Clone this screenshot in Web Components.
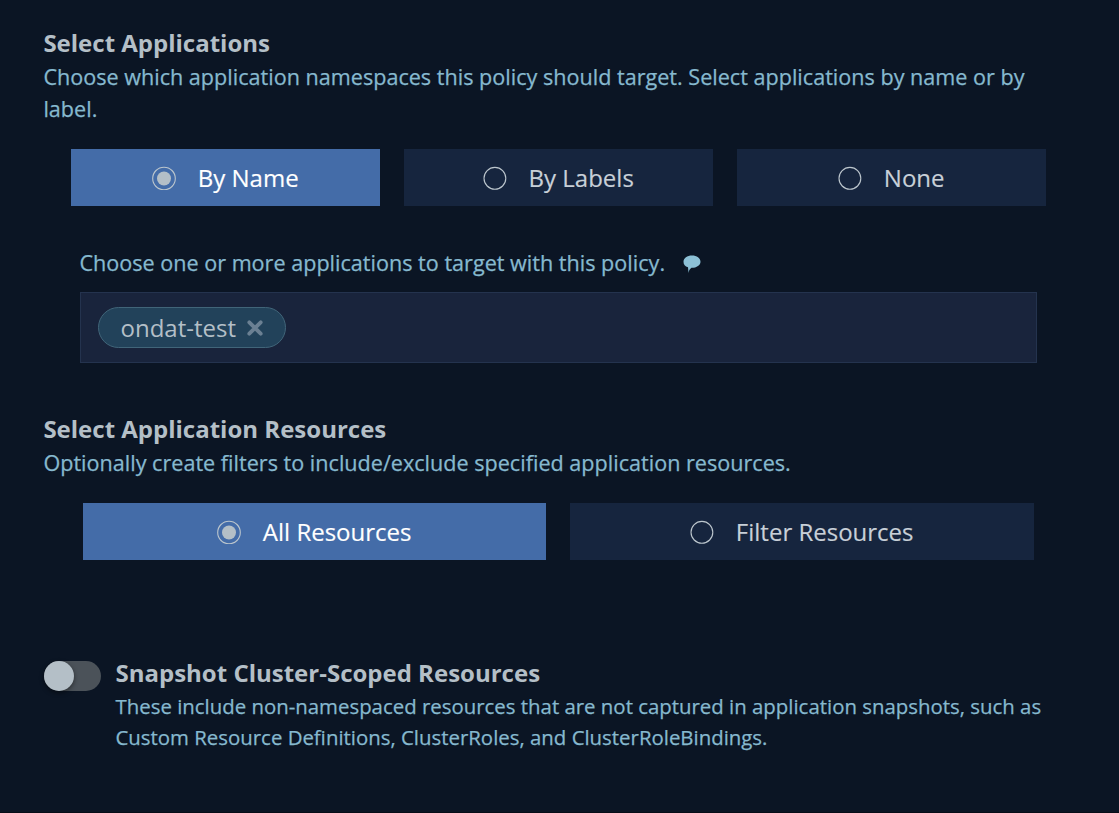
<!DOCTYPE html>
<html lang="en"><head><meta charset="utf-8"><title>Policy</title>
<style>
body{margin:0;background:#0b1524;font-family:"Open Sans",sans-serif;min-height:813px;overflow:hidden}
</style></head><body>
<policy-form></policy-form>
<script>
class SectionHead extends HTMLElement{
 constructor(){super();this.attachShadow({mode:'open'}).innerHTML=`<style>
 :host{display:block}
 h2{margin:0;font-size:24px;line-height:32px;font-weight:700;color:#b4bfc7;white-space:nowrap}
 p{margin:0;font-size:var(--desc-size,21.6px);line-height:var(--desc-lh,32px);color:#86b9cf;-webkit-text-stroke:.25px #86b9cf;white-space:nowrap;padding-top:var(--desc-gap,2px)}
 </style><h2><slot name="title"></slot></h2><p><slot></slot></p>`}
}
customElements.define('section-head',SectionHead);
class RadioTile extends HTMLElement{
 constructor(){super();this.attachShadow({mode:'open'}).innerHTML=`<style>
 :host{display:flex;box-sizing:border-box;height:57px;align-items:center;justify-content:center;gap:21.600px;background:#16253e;color:#c8d0d8;font-size:24px;line-height:32px;white-space:nowrap}
 :host([checked]){background:#446ca8;color:#fff}
 circle{fill:none;stroke:#bcc6cd;stroke-width:1.1}
 circle.dot{display:none;fill:#b4bfc7;stroke:none}
 .on{display:none}
 :host([checked]) .on,:host([checked]) circle.dot{display:block}
 :host([checked]) .off{display:none}
 svg{display:block;width:24px;height:24px;flex:none}
 span{padding-top:1px;margin-right:.2px;-webkit-text-stroke:.15px currentColor}
 </style><svg viewBox="0 0 24 24"><circle class="off" cx="11.900" cy="12.300" r="10.900"/><circle class="on" cx="12" cy="12.500" r="11.300"/><circle class="dot" cx="12" cy="12.500" r="7"/></svg><span><slot></slot></span>`}
}
customElements.define('radio-tile',RadioTile);
class AppChip extends HTMLElement{
 constructor(){super();this.attachShadow({mode:'open'}).innerHTML=`<style>
 :host{display:inline-flex;box-sizing:border-box;width:188px;height:41px;border:1px solid #416579;border-radius:21px;background:#22425a;color:#b4bfc7;font-size:24px;line-height:39px;align-items:center;padding-left:21.500px;gap:11.500px;white-space:nowrap}
 svg{width:16px;height:16px;display:block}
 </style><span><slot></slot></span><svg viewBox="0 0 16 16"><path d="M2.300 2.300L13.700 13.700M13.700 2.300L2.300 13.700" stroke="#6b8093" stroke-width="3.800" stroke-linecap="round"/></svg>`}
}
customElements.define('app-chip',AppChip);
class ToggleSwitch extends HTMLElement{
 constructor(){super();this.attachShadow({mode:'open'}).innerHTML=`<style>
 :host{display:block;width:57px;height:30px;border-radius:15px;background:#4b5259;flex:none}
 i{display:block;width:30px;height:30px;border-radius:50%;background:#b4bfc7;box-shadow:0 2px 5px rgba(0,0,0,.45)}
 </style><i></i>`}
}
customElements.define('toggle-switch',ToggleSwitch);
class PolicyForm extends HTMLElement{
 constructor(){super();this.attachShadow({mode:'open'}).innerHTML=`<style>
 :host{display:block;padding:27px 0 0 43.4px;box-sizing:border-box;height:813px;border-bottom:1px solid #070d17}
 .row{display:grid;column-gap:24px}
 .three{grid-template-columns:repeat(3,309px);margin:24px 0 0 27.6px}
 .two{grid-template-columns:463px 464px;margin:24px 0 0 39.6px}
 .label{display:flex;align-items:center;gap:17.500px;margin:41px 0 0 36px;font-size:21.6px;line-height:32px;color:#86b9cf;-webkit-text-stroke:.25px #86b9cf}
 .label svg{display:block;width:18px;height:18px;margin-top:1.500px}
 .field{box-sizing:border-box;width:957px;height:71px;border:1px solid #24334e;background:#19243c;margin:13px 0 0 36.6px;padding:14px 17px;display:flex}
 .resources{margin-top:50px}
 .cluster{display:flex;gap:14.500px;margin-top:97px;--desc-size:20.4px;--desc-lh:31px;--desc-gap:2px}
 toggle-switch{margin:4px 0 0 .6px}
 </style>
 <section-head><span slot="title">Select Applications</span>Choose which application namespaces this policy should target. Select applications by name or by<br>label.</section-head>
 <div class="row three"><radio-tile checked>By Name</radio-tile><radio-tile>By Labels</radio-tile><radio-tile>None</radio-tile></div>
 <div class="label"><span>Choose one or more applications to target with this policy.</span><svg viewBox="0 0 18 18"><path d="M9 .5C4.200.5.5 3.200.5 6.700c0 2.700 1.600 4.700 4.500 5.600L5.500 18c.4-2.500 1.400-4.200 3-5.200 5 .1 9-2.600 9-6.100S13.800.5 9 .5z" fill="#8cc0d6" stroke="none"/></svg></div>
 <div class="field"><app-chip>ondat-test</app-chip></div>
 <section-head class="resources"><span slot="title">Select Application Resources</span>Optionally create filters to include/exclude specified application resources.</section-head>
 <div class="row two"><radio-tile checked>All Resources</radio-tile><radio-tile>Filter Resources</radio-tile></div>
 <div class="cluster"><toggle-switch></toggle-switch><section-head><span slot="title">Snapshot Cluster-Scoped Resources</span>These include non-namespaced resources that are not captured in application snapshots, such as<br>Custom Resource Definitions, ClusterRoles, and ClusterRoleBindings.</section-head></div>`}
}
customElements.define('policy-form',PolicyForm);
</script></body></html>
